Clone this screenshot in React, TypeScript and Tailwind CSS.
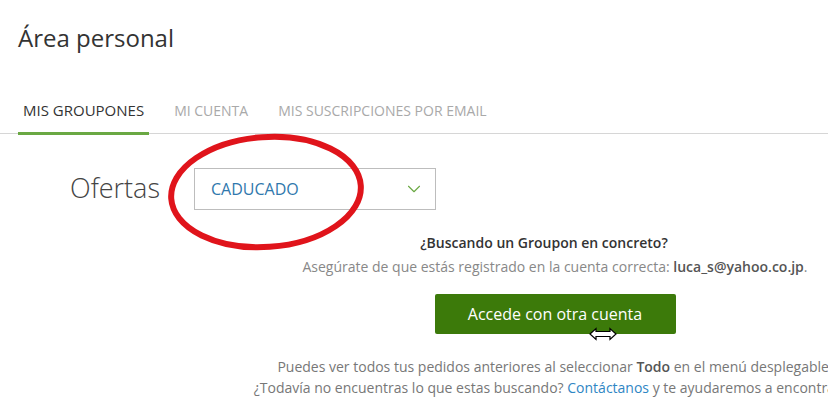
import { ChevronDown } from 'lucide-react';

const tabs = [
  { label: 'MIS GROUPONES', active: true },
  { label: 'MI CUENTA', active: false },
  { label: 'MIS SUSCRIPCIONES POR EMAIL', active: false },
];

const ResizeCursor = () => (
  <svg width="28" height="14" viewBox="0 0 28 14" className="absolute left-[589px] top-[327px]">
    <path
      d="M1 7 L7 1.5 L7 4.5 L21 4.5 L21 1.5 L27 7 L21 12.5 L21 9.5 L7 9.5 L7 12.5 Z"
      fill="#fff"
      stroke="#000"
      strokeWidth="1.2"
    />
  </svg>
);

export default function App() {
  return (
    <div className="relative h-[420px] w-[828px] overflow-hidden bg-white font-['Open_Sans',sans-serif]">
      <h1 className="ml-[18px] pt-[22px] text-[24px] leading-[32px] text-[#333]">Área personal</h1>

      <div className="mt-[45px] flex items-end border-b border-[#d6d6d6] pl-[18px]">
        {tabs.map((tab) => (
          <div
            key={tab.label}
            className={
              tab.active
                ? 'mb-[-2px] border-b-[3px] border-[#6aa843] px-[5px] pb-[10px] text-[15px] text-[#333]'
                : 'ml-[20px] px-[5px] pb-[12px] text-[14px] text-[#a9a9a9]'
            }
          >
            {tab.label}
          </div>
        ))}
      </div>

      <div className="mt-[34px] flex items-center">
        <span className="ml-[70px] text-[27px] font-light text-[#444]">Ofertas</span>
        <div className="ml-[34px] flex h-[42px] w-[242px] items-center justify-between border border-[#bdbdbd] pl-[16px] pr-[10px]">
          <span className="text-[16px] text-[#2f78ad]">CADUCADO</span>
          <ChevronDown size={22} strokeWidth={1.2} className="text-[#6aa843]" />
        </div>
      </div>

      <div className="ml-[255px] mt-[22px] flex w-[600px] flex-col items-center whitespace-nowrap text-center">
        <p className="mr-[22px] text-[14px] font-semibold text-[#333]">¿Buscando un Groupon en concreto?</p>
        <p className="mt-[3px] text-[14px] text-[#888]">
          Asegúrate de que estás registrado en la cuenta correcta:{' '}
          <span className="font-semibold text-[#555]">luca_s@yahoo.co.jp</span>.
        </p>
        <button className="mt-[17px] h-[40px] w-[241px] rounded-[2px] bg-[#3c7a0a] text-[16px] text-white">
          Accede con otra cuenta
        </button>
        <p className="mt-[22px] text-[14px] leading-[21px] text-[#777]">
          Puedes ver todos tus pedidos anteriores al seleccionar{' '}
          <span className="font-semibold text-[#555]">Todo</span> en el menú desplegable.
        </p>
        <p className="text-[14px] leading-[21px] text-[#777]">
          ¿Todavía no encuentras lo que estas buscando? <span className="text-[#2f86c4]">Contáctanos</span> y te
          ayudaremos a encontrarlo.
        </p>
      </div>

      <svg width="210" height="124" viewBox="0 0 210 124" className="absolute left-[165px] top-[131px]">
        <ellipse
          cx="101"
          cy="61"
          rx="95"
          ry="55"
          fill="none"
          stroke="#e0141b"
          strokeWidth="6"
          transform="rotate(-4 101 61)"
        />
      </svg>

      <ResizeCursor />
    </div>
  );
}
